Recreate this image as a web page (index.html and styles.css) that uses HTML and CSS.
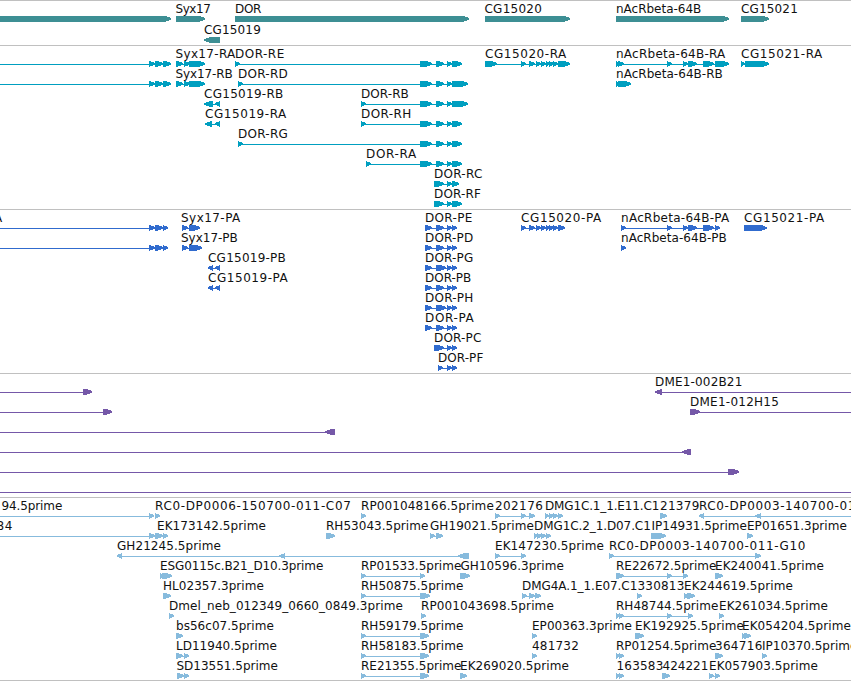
FILE: index.html
```html
<!DOCTYPE html>
<html lang="en">
<head>
    <meta charset="UTF-8">
    <title>Genome tracks</title>
    <link rel="stylesheet" href="styles.css">
</head>
<body>

<main class="tracks">
    <svg class="track track-genes" id="genes"></svg>
    <svg class="track track-transcripts" id="transcripts"></svg>
    <svg class="track track-proteins" id="proteins"></svg>
    <svg class="track track-clones" id="clones"></svg>
    <svg class="track track-ests" id="ests"></svg>
</main>

<script src="tracks.js"></script>
</body>
</html>
```
FILE: styles.css
```css
* {
    margin: 0;
    padding: 0;
    box-sizing: border-box;
}
body {
    background: white;
    overflow: hidden;
}
.tracks {
    display: flex;
    flex-direction: column;
    border-bottom: 1px solid #c0c0c0;
}
.track {
    display: block;
    width: 100%;
    border-top: 1px solid #c0c0c0;
    overflow: hidden;
}
.track-genes {
    height: 45px;
    color: #3d8f94;
}
.track-transcripts {
    height: 164px;
    color: #009fc0;
}
.track-proteins {
    height: 164px;
    color: #306bce;
}
.track-clones {
    height: 124px;
    color: #7558a8;
}
.track-ests {
    height: 183px;
    color: #87bbdd;
}
.label {
    font-family: "DejaVu Sans", sans-serif;
    font-size: 12px;
    fill: #111;
}
.box, .intron {
    fill: currentColor;
    shape-rendering: crispEdges;
}
```
FILE: tracks.js
```js
// feature: [row, label, label left, label right, boxes, strand, line start, line end]
const tracks = {
    genes: [
        [0, "", 0, 0, "-20:171"],
        [0, "Syx17", 176, 210.5, "176:205"],
        [0, "DOR", 235.5, 261, "235:469"],
        [0, "CG15020", 485, 541.5, "485:570"],
        [0, "nAcRbeta-64B", 616.5, 701, "616:729"],
        [0, "CG15021", 741.5, 797.5, "741:769"],
        [1, "CG15019", 204.5, 260.5, "204:220", "-"]
    ],
    transcripts: [
        [0, "", 0, 0, "149:155 155:163 163:171", "+", -10],
        [0, "Syx17-RA", 176, 235, "176:183 184:190 189:205"],
        [0, "DOR-RE", 235.5, 284, "235:240 420:432 436:444 447:452 452:462"],
        [0, "CG15020-RA", 485.5, 566, "485:497 521:526 529:535 536:541 541:546 546:550 549:554 553:558 558:570"],
        [0, "nAcRbeta-64B-RA", 616.5, 725, "616:620 618:624 667:672 683:688 688:697 703:714 715:729"],
        [0, "CG15021-RA", 741.5, 822, "741:745 745:769"],
        [1, "", 0, 0, "149:155 155:163 163:171", "+", -10],
        [1, "Syx17-RB", 176, 232.5, "176:183 184:190 189:205"],
        [1, "DOR-RD", 238.5, 287.5, "238:243 420:432 436:444 447:452 452:468"],
        [1, "nAcRbeta-64B-RB", 616.5, 722.5, "616:620 618:631"],
        [2, "CG15019-RB", 204.5, 283, "204:213 215:220", "-"],
        [2, "DOR-RB", 361.5, 408.5, "361:366 420:432 436:444 447:452 452:468"],
        [3, "CG15019-RA", 205.5, 286, "205:212 215:220", "-"],
        [3, "DOR-RH", 361.5, 411, "361:366 420:432 436:444 447:452 452:462"],
        [4, "DOR-RG", 238.5, 287.5, "238:243 420:432 436:444 447:452 452:462"],
        [5, "DOR-RA", 366.5, 416, "366:371 420:432 436:444 447:452 452:462"],
        [6, "DOR-RC", 434.5, 482, "434:444 447:452 452:459"],
        [7, "DOR-RF", 434.5, 480.5, "434:444 447:452 452:462"]
    ],
    proteins: [
        [0, "A", -5.5, 2.5, "149:155 155:163 163:168", "+", -10],
        [0, "Syx17-PA", 181.5, 240, "182:188 189:200"],
        [0, "DOR-PE", 425.5, 472, "425:432 436:444 447:452 452:457"],
        [0, "CG15020-PA", 521.5, 601, "521:526 529:535 536:541 541:546 546:550 549:554 553:558 558:565"],
        [0, "nAcRbeta-64B-PA", 621.5, 729, "621:626 667:672 683:688 688:697 703:714 715:720"],
        [0, "CG15021-PA", 744.5, 824, "744:767"],
        [1, "", 0, 0, "149:155 155:163 163:168", "+", -10],
        [1, "Syx17-PB", 181.5, 237.5, "182:188 189:202"],
        [1, "DOR-PD", 425.5, 473, "425:432 436:444 447:452 452:457"],
        [1, "nAcRbeta-64B-PB", 621.5, 726.5, "621:626"],
        [2, "CG15019-PB", 208.5, 285.5, "208:213 215:220", "-"],
        [2, "DOR-PG", 425.5, 473, "425:432 436:446 447:452 452:457"],
        [3, "CG15019-PA", 208.5, 287.5, "208:213 215:220", "-"],
        [3, "DOR-PB", 425.5, 471, "425:432 436:444 447:452 452:457"],
        [4, "DOR-PH", 425.5, 473, "425:432 436:446 447:452 452:457"],
        [5, "DOR-PA", 425.5, 473.5, "425:432 436:444 447:452 452:457"],
        [6, "DOR-PC", 434.5, 481, "434:444 447:452 452:457"],
        [7, "DOR-PF", 438.5, 483, "438:443 447:452 452:457"]
    ],
    clones: [
        [0, "", 0, 0, "83:92", "+", -10],
        [0, "DME1-002B21", 655.5, 742, "655:662", "-", 655, 860],
        [1, "", 0, 0, "103:112", "+", -10],
        [1, "DME1-012H15", 690.5, 778.5, "690:700", "+", 690, 860],
        [2, "", 0, 0, "325:335", "-", -10],
        [3, "", 0, 0, "682:691", "-", -10],
        [4, "", 0, 0, "728:739", "+", -10],
        [5, "", 0, 0, "", "+", -10, 860]
    ],
    ests: [
        [0, "94.5prime", 2, 62, "149:154", "+", -10],
        [0, "RC0-DP0006-150700-011-C07", 155.5, 350.5, "155:160"],
        [0, "RP001048166.5prime", 361.5, 493.5, "361:366"],
        [0, "202176", 495.5, 542.5, "495:500 521:526 529:535"],
        [0, "DMG1C.1_1.E11.C1", 545.5, 659, "545:549 549:554 553:558 558:563"],
        [0, "21379", 660.5, 699, "660:667"],
        [0, "RC0-DP0003-140700-011-G10", 699.5, 895, "699:704 755:761", "-", 699, 860],
        [1, "84", -3, 12, "149:155 155:163 163:168", "+", -10],
        [1, "EK173142.5prime", 157.5, 265.5, "157:163"],
        [1, "RH53043.5prime", 326.5, 428, "326:335"],
        [1, "GH19021.5prime", 430.5, 533.5, "430:435 436:443"],
        [1, "DMG1C.2_1.D07.C1", 534.5, 650.5, "534:538 537:542 541:546 546:551"],
        [1, "IP14931.5prime", 652, 746.5, "651:666"],
        [1, "EP01651.3prime", 747.5, 846.5, "747:753"],
        [2, "GH21245.5prime", 117.5, 220.5, "117:122 279:285 458:469", "-"],
        [2, "EK147230.5prime", 495.5, 603.5, "495:500 521:526"],
        [2, "RC0-DP0003-140700-011-G10", 609.5, 805, "609:614 755:761"],
        [3, "ESG0115c.B21_D10.3prime", 160.5, 323, "160:165 162:172"],
        [3, "RP01533.5prime", 361.5, 461, "361:366 420:425"],
        [3, "GH10596.3prime", 461, 563.5, "460:470"],
        [3, "RE22672.5prime", 616.5, 716, "616:624 667:672 683:688"],
        [3, "EK240041.5prime", 715.5, 823.5, "715:723"],
        [4, "HL02357.3prime", 163.5, 263.5, "163:171"],
        [4, "RH50875.5prime", 361.5, 463, "361:366 420:430"],
        [4, "DMG4A.1_1.E07.C1", 522.5, 637, "522:527 529:535 535:541"],
        [4, "330813", 638, 684, "637:642"],
        [4, "EK244619.5prime", 684.5, 792.5, "684:689 687:695"],
        [5, "Dmel_neb_012349_0660_0849.3prime", 169.5, 402.5, "169:174"],
        [5, "RP001043698.5prime", 421.5, 553.5, "421:426"],
        [5, "RH48744.5prime", 616.5, 718, "616:620 619:624 667:672 688:693"],
        [5, "EK261034.5prime", 719.5, 827.5, "719:724"],
        [6, "bs56c07.5prime", 176.5, 273.5, "176:183"],
        [6, "RH59179.5prime", 361.5, 463, "361:366 420:429"],
        [6, "EP00363.3prime", 532.5, 631.5, "532:537"],
        [6, "EK192925.5prime", 635.5, 743.5, "635:644"],
        [6, "EK054204.5prime", 742.5, 850.5, "742:747 744:751"],
        [7, "LD11940.5prime", 176.5, 276.5, "176:183 184:189"],
        [7, "RH58183.5prime", 361.5, 463, "361:366 420:429"],
        [7, "481732", 532.5, 578.5, "532:537"],
        [7, "RP01254.5prime", 616.5, 716, "616:620 619:624"],
        [7, "364716", 715.5, 762, "715:723"],
        [7, "IP10370.5prime", 762.5, 857, "762:767"],
        [8, "SD13551.5prime", 177, 277.5, "177:184 184:189"],
        [8, "RE21355.5prime", 361.5, 461, "361:366 420:429"],
        [8, "EK269020.5prime", 460.5, 568.5, "460:467"],
        [8, "163583", 617, 663, "616:620 619:624"],
        [8, "424221", 663, 708, "662:670"],
        [8, "EK057903.5prime", 709.5, 817.5, "709:714 715:720"]
    ]
};

function add(svg, tag, attrs) {
    const el = document.createElementNS("http://www.w3.org/2000/svg", tag);
    for (const key in attrs) el.setAttribute(key, attrs[key]);
    svg.appendChild(el);
    return el;
}

// pointed box, 6px high, the tip is on the side of the strand
function arrow(start, end, y, strand) {
    const tip = Math.min(6, end - start);
    if (strand === "-") {
        return `${end},${y} ${start + tip},${y} ${start},${y + 2} ${start},${y + 3.5} ${start + tip},${y + 6} ${end},${y + 6}`;
    }
    return `${start},${y} ${end - tip},${y} ${end},${y + 2} ${end},${y + 3.5} ${end - tip},${y + 6} ${start},${y + 6}`;
}

for (const id in tracks) {
    const svg = document.getElementById(id);
    const rowHeight = id === "genes" ? 21 : 20;

    for (const [row, label, left, right, list, strand = "+", from, to] of tracks[id]) {
        const y = row * rowHeight;
        const boxes = list ? list.split(" ").map(b => b.split(":").map(Number)) : [];
        const x1 = from ?? boxes[0][0];
        const x2 = to ?? boxes[boxes.length - 1][1] - 2;

        add(svg, "rect", { class: "intron", x: x1, y: y + 18, width: x2 - x1, height: 1 });
        for (const [start, end] of boxes) {
            add(svg, "polygon", { class: "box", points: arrow(start, end, y + 15, strand) });
        }
        if (label) {
            add(svg, "text", {
                class: "label", x: left - 0.5, y: y + 12,
                textLength: right - left + 0.8, lengthAdjust: "spacing"
            }).textContent = label;
        }
    }
}
```
